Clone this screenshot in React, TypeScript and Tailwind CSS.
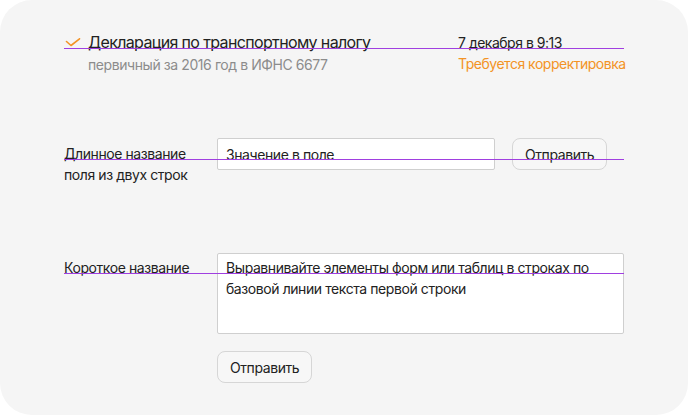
import React from 'react';

const Baseline: React.FC<{ top: string }> = ({ top }) => (
  <div className={`pointer-events-none absolute left-0 right-0 z-10 h-px bg-[#a03fe0] ${top}`} />
);

const CheckIcon: React.FC = () => (
  <svg width="16" height="10" viewBox="0 0 16 10" fill="none" className="mt-[8px]">
    <path d="M1.5 3.5 L6 7.5 L14.5 0.8" stroke="#f39325" strokeWidth="1.6" strokeLinecap="round" strokeLinejoin="round" />
  </svg>
);

const SendButton: React.FC = () => (
  <button className="flex h-8 items-center rounded-lg border border-[#d6d6d6] bg-[#f7f7f7] px-3 text-sm leading-[21px] tracking-[-0.03em] text-[#222]">
    Отправить
  </button>
);

const App: React.FC = () => {
  return (
    <div className="min-h-screen bg-white">
      <div className="h-[415px] w-[688px] rounded-[32px] bg-[#f5f5f5] pl-16 pt-[30px] font-['Inter',_'Noto_Sans',_sans-serif] text-[#222]">
        {/* Document header */}
        <div className="relative flex w-[560px] justify-between">
          <div className="flex">
            <div className="w-6 pl-[1px]">
              <CheckIcon />
            </div>
            <div>
              <div className="text-base leading-6 tracking-[-0.04em]">Декларация по транспортному налогу</div>
              <div className="text-sm leading-[21px] tracking-[-0.03em] text-[#8c8c8c]">
                первичный за 2016 год в ИФНС 6677
              </div>
            </div>
          </div>
          <div className="w-[166px] whitespace-nowrap pt-[2px] text-sm leading-[21px] tracking-[-0.035em]">
            <div>7 декабря в 9:13</div>
            <div className="text-[#f39325]">Требуется корректировка</div>
          </div>
          <Baseline top="top-[18px]" />
        </div>

        {/* Row with two-line label */}
        <div className="relative mt-[63px] flex w-[560px] items-start text-sm leading-[21px] tracking-[-0.03em]">
          <label className="w-[153px] pr-4 pt-[5px]">Длинное название поля из двух строк</label>
          <input
            readOnly
            defaultValue="Значение в поле"
            className="h-8 w-[278px] rounded-[2px] border border-[#cfcfcf] bg-white px-2 text-[#222] outline-none"
          />
          <div className="ml-[17px]">
            <SendButton />
          </div>
          <Baseline top="top-[21px]" />
        </div>

        {/* Row with textarea */}
        <div className="relative mt-[68px] flex w-[560px] items-start text-sm leading-[21px] tracking-[-0.03em]">
          <label className="w-[153px] pt-[4px]">Короткое название</label>
          <textarea
            readOnly
            defaultValue="Выравнивайте элементы форм или таблиц в строках по базовой линии текста первой строки"
            className="h-[81px] w-[407px] resize-none rounded-[2px] border border-[#cfcfcf] bg-white px-2 pt-[3px] text-[#222] outline-none"
          />
          <Baseline top="top-[20px]" />
        </div>
        <div className="ml-[153px] mt-[17px]">
          <SendButton />
        </div>
      </div>
    </div>
  );
};

export default App;
